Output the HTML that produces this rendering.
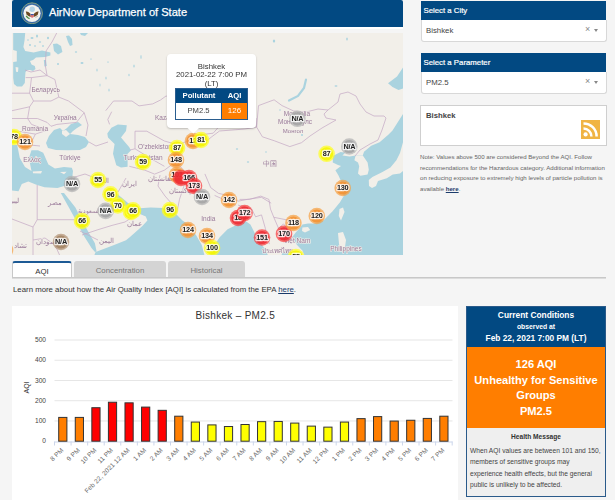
<!DOCTYPE html>
<html><head><meta charset="utf-8">
<style>
html,body{margin:0;padding:0;}
body{width:615px;height:500px;overflow:hidden;background:#f5f5f5;font-family:"Liberation Sans",sans-serif;position:relative;color:#333;}
.abs{position:absolute;}
#hdr{left:12px;top:0;width:391px;height:27px;background:#024982;border-radius:2px 2px 0 0;}
#hdrtxt{left:49px;top:5.8px;font-size:11.1px;-webkit-text-stroke:0.25px #fff;color:#fff;line-height:13px;white-space:nowrap;}
#whitestrip{left:12px;top:27px;width:391px;height:2px;background:#fff;}
#map{left:12px;top:33px;width:391px;height:222px;overflow:hidden;background:#f2efe9;will-change:transform;}
.selhdr{left:421px;width:185px;height:19px;background:#024982;color:#fff;font-size:7.8px;line-height:19px;}
.selhdr span{position:absolute;left:2.5px;top:-0.3px;-webkit-text-stroke:0.2px #fff;}
.selbox{left:420.5px;width:184.5px;height:20.5px;background:#fff;border:1px solid #d8d8d8;border-top:none;border-radius:0 0 3px 3px;font-size:8px;color:#444;}
.selbox .v{position:absolute;left:4.5px;top:6px;line-height:9px;font-size:7.8px;}
.selbox .x{position:absolute;left:163.5px;top:5px;font-size:9px;color:#888;line-height:9px;}
.selbox .c{position:absolute;left:172.5px;top:9px;width:0;height:0;border-left:2.6px solid transparent;border-right:2.6px solid transparent;border-top:3px solid #888;}
#rssbox{left:420px;top:105px;width:185px;height:39px;background:#fff;border:1px solid #cfcfcf;}
#note{left:420px;top:152px;width:192px;font-size:6.1px;line-height:10.7px;color:#666;}
.tab{top:261px;height:16px;border-radius:3px 3px 0 0;font-size:7.8px;line-height:20px;text-align:center;color:#777;background:#d4d4d4;}
#tabline{left:12px;top:277px;width:594px;height:1px;background:#c8c8c8;border-bottom:1px solid #dcdcdc;}
#learn{left:13px;top:285px;font-size:7.82px;line-height:9px;color:#333;white-space:nowrap;}
#chart{left:12px;top:306px;width:446px;height:194px;background:#fff;}
#cc{left:466px;top:306px;width:138px;height:189px;border:1px solid #2a5a8a;background:#efefef;}
#cchead{left:0;top:0;width:138px;height:40px;background:#024982;color:#fff;text-align:center;font-weight:bold;}
#ccorange{left:0;top:40px;width:138px;height:81px;background:#ff7e00;color:#fff;text-align:center;font-weight:bold;font-size:11.1px;line-height:15.6px;}
#cchealth{left:0;top:121px;width:138px;height:68px;color:#333;}
</style></head><body>
<div id="hdr" class="abs"></div>
<div id="seal" class="abs" style="left:21px;top:2px;width:22px;height:22px;">
<svg width="22" height="22" viewBox="0 0 22 22">
<circle cx="11" cy="11.3" r="10.5" fill="#3a6ca6" stroke="#a9b87a" stroke-width="0.7"/>
<circle cx="11" cy="11.3" r="8.6" fill="#f3f2ee"/>
<circle cx="11.2" cy="7.2" r="2.7" fill="#b4d3e6"/>
<path d="M4.8 9.6 Q6.5 8.8 9.3 11.6 L9.8 15 Q7 14.2 5.6 12.4 Z" fill="#6b4a24"/>
<path d="M17.6 9.6 Q15.9 8.8 13.1 11.6 L12.6 15 Q15.4 14.2 16.8 12.4 Z" fill="#6b4a24"/>
<circle cx="11.2" cy="11.2" r="1.2" fill="#f6f6f6"/>
<path d="M9.6 12.4 h3.2 v2.4 q-1.6 1.8 -3.2 0 z" fill="#dc7070"/>
<rect x="9.6" y="12" width="3.2" height="1.1" fill="#3b5aa5"/>
<path d="M5.2 13.8 q1.3 2.2 3.4 2.9" stroke="#4e8d3e" stroke-width="1.3" fill="none"/>
<path d="M14.5 15.5 l2.6 -1.6" stroke="#b8b8b0" stroke-width="1" fill="none"/>
</svg>
</div>
<div id="hdrtxt" class="abs">AirNow Department of State</div>
<div id="whitestrip" class="abs"></div>
<div id="map" class="abs">
<svg width="391" height="222" viewBox="0 0 391 222" id="mapsvg" font-family="Liberation Sans"><ellipse cx="20" cy="5" rx="1.5" ry="1" fill="#aad3df"/>
<ellipse cx="25" cy="3" rx="1" ry="1.5" fill="#aad3df"/>
<ellipse cx="28" cy="9" rx="1.2" ry="0.8" fill="#aad3df"/>
<ellipse cx="18" cy="12" rx="1" ry="1" fill="#aad3df"/>
<ellipse cx="36" cy="5" rx="1" ry="1.2" fill="#aad3df"/>
<ellipse cx="16" cy="7" rx="0.8" ry="0.8" fill="#aad3df"/>
<ellipse cx="23" cy="13" rx="1" ry="0.7" fill="#aad3df"/>
<ellipse cx="31" cy="13" rx="0.8" ry="1" fill="#aad3df"/>
<ellipse cx="64" cy="19" rx="1.2" ry="0.8" fill="#aad3df"/>
<ellipse cx="70" cy="30" rx="1.5" ry="1" fill="#aad3df"/>
<ellipse cx="79" cy="26" rx="1" ry="0.6" fill="#aad3df"/>
<ellipse cx="85" cy="37" rx="0.6" ry="1.5" fill="#aad3df"/>
<ellipse cx="94" cy="45" rx="0.6" ry="1.5" fill="#aad3df"/>
<ellipse cx="96" cy="29" rx="1" ry="0.6" fill="#aad3df"/>
<ellipse cx="46" cy="31" rx="1" ry="1" fill="#aad3df"/>
<ellipse cx="88" cy="52" rx="0.5" ry="1.5" fill="#aad3df"/>
<ellipse cx="97" cy="57" rx="0.6" ry="1.5" fill="#aad3df"/>
<ellipse cx="129" cy="24" rx="0.6" ry="2" fill="#aad3df"/>
<ellipse cx="122" cy="33" rx="0.7" ry="1.5" fill="#aad3df"/>
<ellipse cx="117" cy="42" rx="0.6" ry="1.2" fill="#aad3df"/>
<ellipse cx="262" cy="8" rx="1.2" ry="1.5" fill="#aad3df"/>
<ellipse cx="324" cy="53" rx="1.5" ry="0.8" fill="#aad3df"/>
<ellipse cx="335" cy="6" rx="0.8" ry="1.5" fill="#aad3df"/>
<ellipse cx="290" cy="102" rx="1" ry="1" fill="#aad3df"/>
<ellipse cx="225" cy="116" rx="1.2" ry="0.8" fill="#aad3df"/>
<ellipse cx="236" cy="129" rx="1.2" ry="0.8" fill="#aad3df"/>
<ellipse cx="254" cy="119" rx="0.8" ry="0.8" fill="#aad3df"/>
<ellipse cx="268" cy="77" rx="0.8" ry="0.8" fill="#aad3df"/>
<polygon points="1.2,0.0 13.2,0.0 12.6,7.0 11.4,14.0 13.2,18.0 21.6,19.5 30.0,17.5 38.4,19.5 38.4,22.5 33.0,24.0 24.0,24.5 21.0,27.0 18.0,28.0 19.5,31.5 22.8,33.0 23.5,36.0 21.0,38.0 18.0,37.0 15.6,37.0 13.5,39.0 13.2,43.0 12.8,50.0 10.0,53.6 5.0,53.6 2.0,51.0 1.2,45.0 1.2,29.0 4.8,28.4 4.8,18.0 1.2,17.0" fill="#aad3df"/>
<polygon points="41.0,11.0 45.0,10.5 49.0,13.0 50.4,19.0 46.0,21.6 42.0,18.0" fill="#aad3df"/>
<polygon points="54.0,3.0 57.0,2.4 60.0,6.0 60.5,12.0 58.0,13.0 56.0,9.0" fill="#aad3df"/>
<polygon points="31.8,27.0 34.0,27.0 34.8,33.0 32.5,33.6" fill="#aad3df"/>
<polygon points="68.0,0.0 76.0,0.0 73.0,3.0 69.0,2.0" fill="#aad3df"/>
<polygon points="34.0,110.0 37.0,103.0 42.0,97.0 48.0,95.0 51.0,98.0 55.0,95.0 59.0,91.0 66.0,89.0 70.0,92.0 65.0,95.0 61.0,98.0 58.0,101.0 66.0,102.0 73.0,104.0 77.0,109.0 74.0,114.0 68.0,117.0 56.0,117.2 44.0,117.0 36.0,115.0" fill="#aad3df"/>
<polygon points="0.0,112.0 5.2,112.0 7.8,125.0 13.0,134.0 19.5,138.0 16.9,125.0 19.5,117.2 26.0,117.2 31.2,119.8 36.4,131.5 42.9,135.4 52.0,134.1 59.8,134.8 61.0,138.0 59.8,148.4 55.5,156.0 53.7,152.6 45.5,155.0 32.5,154.2 24.4,151.8 16.3,148.5 9.8,151.0 6.5,158.3 0.0,157.4" fill="#aad3df"/>
<polygon points="48.8,159.9 52.0,159.9 63.4,174.5 68.3,184.3 76.4,198.9 82.9,210.3 84.6,218.4 83.0,219.0 79.7,215.2 71.5,202.2 65.0,189.2 56.9,174.5" fill="#aad3df"/>
<polygon points="82.0,223.0 83.6,219.0 100.8,212.4 114.0,207.2 118.0,204.0 130.4,193.0 135.4,187.5 133.8,183.5 128.0,181.0 128.0,175.3 138.6,174.5 151.2,175.0 165.0,181.9 170.5,187.4 176.0,191.6 184.3,202.6 189.9,212.3 192.6,223.0" fill="#aad3df"/>
<polygon points="105.0,161.0 109.0,164.0 116.0,170.0 124.0,174.0 128.0,175.5 128.0,180.0 122.0,178.0 114.0,174.0 107.0,168.0 103.0,164.0" fill="#aad3df"/>
<polygon points="99.4,94.8 105.9,91.5 114.8,92.3 114.0,98.0 109.0,104.5 117.3,114.3 118.9,117.5 115.6,120.8 115.6,133.8 109.0,134.6 104.3,132.2 101.0,120.8 102.6,111.0 96.0,104.5 95.3,100.5" fill="#aad3df"/>
<polygon points="198.0,223.0 201.0,214.2 207.5,204.4 215.6,196.3 225.4,191.4 233.5,188.1 238.4,191.4 241.7,197.9 246.5,207.7 253.0,215.8 256.3,223.0" fill="#aad3df"/>
<polygon points="271.0,219.0 276.0,217.0 280.0,223.0 269.0,223.0" fill="#aad3df"/>
<polygon points="292.6,223.0 290.4,217.4 284.8,211.8 280.3,204.0 283.7,199.5 287.0,196.1 290.4,191.6 296.0,190.5 301.6,190.5 311.7,187.2 320.6,178.2 328.0,169.2 331.7,163.1 329.5,155.0 328.5,147.0 326.5,142.5 323.4,137.3 329.0,133.0 326.0,132.0 320.8,129.5 320.8,123.0 328.6,119.1 339.0,120.4 343.6,122.4 350.8,122.4 352.0,118.8 359.2,112.8 367.6,109.2 376.0,102.0 380.5,97.6 391.0,81.0 391.0,223.0" fill="#aad3df"/>
<polygon points="391.0,34.5 385.0,43.5 376.0,50.3 380.5,54.0 386.5,57.0 391.0,55.5" fill="#aad3df"/>
<polygon points="3.6,34.0 6.4,34.5 6.0,39.0 4.0,38.8" fill="#f2efe9"/>
<polygon points="50.0,98.0 54.0,97.0 58.0,101.0 54.0,104.0 50.0,101.0" fill="#f2efe9"/>
<polygon points="20.8,138.5 30.0,138.0 29.0,140.6 21.0,140.2" fill="#f2efe9"/>
<polygon points="48.0,139.0 54.6,138.7 52.0,141.3" fill="#f2efe9"/>
<polygon points="391.0,109.2 388.0,120.0 384.4,127.2 378.4,134.4 370.0,139.2 360.4,144.0 356.8,147.0 357.0,153.0 360.0,155.0 364.0,153.0 366.0,148.0 374.8,145.2 380.8,141.6 388.0,140.4 391.0,138.0" fill="#f2efe9"/>
<polygon points="343.6,122.4 350.8,122.4 355.6,129.6 356.8,136.8 355.6,141.6 348.4,142.8 346.0,140.4 347.2,133.2 346.0,129.6 342.4,127.2" fill="#f2efe9"/>
<polygon points="330.4,122.4 337.6,123.6 343.6,122.4 340.0,119.0 333.0,120.0" fill="#f2efe9"/>
<polygon points="327.5,176.0 331.0,174.5 332.5,179.0 329.0,187.5 326.8,183.0" fill="#f2efe9"/>
<polygon points="326.0,200.0 331.0,199.0 334.0,207.0 333.0,214.0 329.0,217.0 327.0,211.0" fill="#f2efe9"/>
<polygon points="290.4,194.5 296.0,193.9 298.2,197.0 293.0,199.5 290.0,198.0" fill="#f2efe9"/>
<polyline points="294.0,46.5 292.0,55.0 286.0,63.0 277.0,67.5" fill="none" stroke="#aad3df" stroke-width="2.2" stroke-linecap="round"/>
<polyline points="44.7,0.0 40.0,9.0 34.1,17.9 33.3,32.5 35.1,42.6" fill="none" stroke="#c4a9c4" stroke-width="0.9" stroke-opacity="0.8"/>
<polyline points="19.5,44.6 35.1,42.6 42.9,46.5 46.8,64.1 39.0,68.0 21.5,68.0 17.6,60.2 19.5,44.6" fill="none" stroke="#c4a9c4" stroke-width="0.9" stroke-opacity="0.8"/>
<polyline points="13.7,44.6 19.5,44.6" fill="none" stroke="#c4a9c4" stroke-width="0.9" stroke-opacity="0.8"/>
<polyline points="13.0,37.0 19.0,39.0 28.0,37.0 35.1,42.6" fill="none" stroke="#c4a9c4" stroke-width="0.9" stroke-opacity="0.8"/>
<polyline points="21.5,68.0 17.6,73.8 15.6,85.5 25.4,85.5 35.1,89.4 39.0,93.3 44.9,91.4 64.4,89.4 72.2,79.7 56.6,68.0 46.8,64.1" fill="none" stroke="#c4a9c4" stroke-width="0.9" stroke-opacity="0.8"/>
<polyline points="0.0,60.2 17.6,60.2" fill="none" stroke="#c4a9c4" stroke-width="0.9" stroke-opacity="0.8"/>
<polyline points="0.0,77.7 17.6,73.8" fill="none" stroke="#c4a9c4" stroke-width="0.9" stroke-opacity="0.8"/>
<polyline points="0.0,85.5 15.6,85.5 19.5,91.4 35.1,97.2 23.4,101.1 0.0,97.2" fill="none" stroke="#c4a9c4" stroke-width="0.9" stroke-opacity="0.8"/>
<polyline points="23.4,101.1 18.0,112.0 28.0,113.0" fill="none" stroke="#c4a9c4" stroke-width="0.9" stroke-opacity="0.8"/>
<polyline points="72.2,79.7 76.0,92.0 74.0,103.0" fill="none" stroke="#c4a9c4" stroke-width="0.9" stroke-opacity="0.8"/>
<polyline points="77.0,109.0 84.0,113.0 96.0,109.0" fill="none" stroke="#c4a9c4" stroke-width="0.9" stroke-opacity="0.8"/>
<polyline points="93.7,77.7 101.5,68.0 120.0,68.0 127.0,72.9 140.7,70.9 148.5,67.0 154.0,63.0 168.0,66.0 186.0,63.0 203.0,67.0 218.0,71.0 232.0,77.0 244.0,85.0 244.6,94.1" fill="none" stroke="#c4a9c4" stroke-width="0.9" stroke-opacity="0.8"/>
<polyline points="99.7,78.7 95.8,86.5 97.6,91.4" fill="none" stroke="#c4a9c4" stroke-width="0.9" stroke-opacity="0.8"/>
<polyline points="118.0,117.0 123.0,115.8 123.0,98.2 134.8,98.2 152.4,108.0 166.0,111.9 175.8,108.0 185.6,102.1 201.2,100.2 208.0,92.4" fill="none" stroke="#c4a9c4" stroke-width="0.9" stroke-opacity="0.8"/>
<polyline points="117.3,133.3 132.9,137.2 142.6,141.1 152.4,137.2 160.2,131.4" fill="none" stroke="#c4a9c4" stroke-width="0.9" stroke-opacity="0.8"/>
<polyline points="123.0,115.8 138.7,125.5 152.4,133.3" fill="none" stroke="#c4a9c4" stroke-width="0.9" stroke-opacity="0.8"/>
<polyline points="244.6,94.1 246.5,72.6 262.1,66.8 270.0,72.6 281.7,78.0 294.0,79.0 306.0,76.0 316.0,77.0 312.0,81.0 314.0,85.0 324.0,87.0 310.0,95.0 298.0,103.0 289.5,109.7 277.8,113.6 262.1,107.7 250.4,103.8 244.6,94.1" fill="none" stroke="#c4a9c4" stroke-width="0.9" stroke-opacity="0.8"/>
<polyline points="316.0,77.0 326.0,69.0 328.0,61.0 336.0,59.0 344.0,63.0 348.0,71.0 354.0,79.0 362.0,83.0 372.0,83.0 374.0,85.0 370.0,97.0 366.0,107.0 358.0,111.0 348.0,117.0 343.0,123.0" fill="none" stroke="#c4a9c4" stroke-width="0.9" stroke-opacity="0.8"/>
<polyline points="188.0,113.6 199.7,103.8 207.5,98.0 232.9,96.0 244.6,94.1" fill="none" stroke="#c4a9c4" stroke-width="0.9" stroke-opacity="0.8"/>
<polyline points="192.9,140.9 198.7,154.6 206.5,160.4 216.3,162.4 226.0,168.2 235.8,166.3 249.5,164.3 259.2,170.2" fill="none" stroke="#c4a9c4" stroke-width="0.9" stroke-opacity="0.8"/>
<polyline points="202.6,162.4 224.1,172.1" fill="none" stroke="#c4a9c4" stroke-width="0.9" stroke-opacity="0.8"/>
<polyline points="173.4,148.7 167.5,166.3 165.6,176.0 163.6,181.9" fill="none" stroke="#c4a9c4" stroke-width="0.9" stroke-opacity="0.8"/>
<polyline points="226.0,172.1 239.7,176.0 243.6,183.8 249.5,181.9 253.4,195.5 257.3,211.1" fill="none" stroke="#c4a9c4" stroke-width="0.9" stroke-opacity="0.8"/>
<polyline points="227.6,166.4 237.4,166.4 248.8,163.1 256.9,166.4 258.5,176.1 261.8,184.3 269.9,185.9 278.0,187.5 287.8,189.2" fill="none" stroke="#c4a9c4" stroke-width="0.9" stroke-opacity="0.8"/>
<polyline points="261.8,184.3 266.7,195.7 271.5,190.8 278.0,199.0 281.0,207.0" fill="none" stroke="#c4a9c4" stroke-width="0.9" stroke-opacity="0.8"/>
<polyline points="160.2,131.4 168.0,133.0 173.0,139.0 173.4,148.7" fill="none" stroke="#c4a9c4" stroke-width="0.9" stroke-opacity="0.8"/>
<polyline points="148.0,142.0 146.0,153.0 153.0,163.0 160.0,171.0 165.6,176.0" fill="none" stroke="#c4a9c4" stroke-width="0.9" stroke-opacity="0.8"/>
<polyline points="114.0,145.0 110.0,152.0 106.0,159.0" fill="none" stroke="#c4a9c4" stroke-width="0.9" stroke-opacity="0.8"/>
<polyline points="55.0,151.0 63.0,144.0 73.0,141.0 83.0,145.0 88.0,151.0" fill="none" stroke="#c4a9c4" stroke-width="0.9" stroke-opacity="0.8"/>
<polyline points="25.2,152.0 25.2,186.7 62.6,186.7" fill="none" stroke="#c4a9c4" stroke-width="0.9" stroke-opacity="0.8"/>
<polyline points="25.2,186.7 21.0,194.0 21.0,223.0" fill="none" stroke="#c4a9c4" stroke-width="0.9" stroke-opacity="0.8"/>
<polyline points="0.0,186.0 21.0,194.0" fill="none" stroke="#c4a9c4" stroke-width="0.9" stroke-opacity="0.8"/>
<polyline points="21.0,207.0 33.0,205.0 43.0,212.0 48.0,223.0" fill="none" stroke="#c4a9c4" stroke-width="0.9" stroke-opacity="0.8"/>
<polyline points="68.0,198.0 78.0,203.0 86.0,207.0" fill="none" stroke="#c4a9c4" stroke-width="0.9" stroke-opacity="0.8"/>
<polyline points="70.0,202.0 85.0,197.0 100.0,192.4 113.0,189.0 122.0,183.0" fill="none" stroke="#c4a9c4" stroke-width="0.9" stroke-opacity="0.8"/>
<text x="33.6" y="59" text-anchor="middle" font-size="6.5" fill="#9a7a9a" stroke="#f2efe9" stroke-width="1.2" paint-order="stroke">Беларусь</text>
<text x="53.2" y="86.5" text-anchor="middle" font-size="6.5" fill="#9a7a9a" stroke="#f2efe9" stroke-width="1.2" paint-order="stroke">Україна</text>
<text x="23" y="97.5" text-anchor="middle" font-size="6.5" fill="#9a7a9a" stroke="#f2efe9" stroke-width="1.2" paint-order="stroke">România</text>
<text x="20" y="128.5" text-anchor="middle" font-size="6.5" fill="#9a7a9a" stroke="#f2efe9" stroke-width="1.2" paint-order="stroke">Ελλάς</text>
<text x="58" y="127" text-anchor="middle" font-size="6.5" fill="#9a7a9a" stroke="#f2efe9" stroke-width="1.2" paint-order="stroke">Türkiye</text>
<text x="160" y="86.5" text-anchor="middle" font-size="6.5" fill="#9a7a9a" stroke="#f2efe9" stroke-width="1.2" paint-order="stroke">Kazakhstan</text>
<text x="143" y="116" text-anchor="middle" font-size="6.5" fill="#9a7a9a" stroke="#f2efe9" stroke-width="1.2" paint-order="stroke">O'zbekiston</text>
<text x="131" y="127" text-anchor="middle" font-size="6.5" fill="#9a7a9a" stroke="#f2efe9" stroke-width="1.2" paint-order="stroke">Turkmenistan</text>
<text x="117.19999999999999" y="153" text-anchor="middle" font-size="6.5" fill="#9a7a9a" stroke="#f2efe9" stroke-width="1.2" paint-order="stroke">ایران</text>
<text x="43" y="172" text-anchor="middle" font-size="6.5" fill="#9a7a9a" stroke="#f2efe9" stroke-width="1.2" paint-order="stroke">مصر</text>
<text x="167.5" y="159.5" text-anchor="middle" font-size="6.5" fill="#9a7a9a" stroke="#f2efe9" stroke-width="1.2" paint-order="stroke">پاکستان</text>
<text x="196.3" y="188" text-anchor="middle" font-size="6.5" fill="#9a7a9a" stroke="#f2efe9" stroke-width="1.2" paint-order="stroke">India</text>
<text x="257.7" y="132.5" text-anchor="middle" font-size="6.5" fill="#9a7a9a" stroke="#f2efe9" stroke-width="1.2" paint-order="stroke">中国</text>
<text x="285" y="210" text-anchor="middle" font-size="6.5" fill="#9a7a9a" stroke="#f2efe9" stroke-width="1.2" paint-order="stroke">Việt Nam</text>
<text x="334" y="218" text-anchor="middle" font-size="6.5" fill="#9a7a9a" stroke="#f2efe9" stroke-width="1.2" paint-order="stroke">Philippines</text>
<text x="265" y="219.5" text-anchor="middle" font-size="6.5" fill="#9a7a9a" stroke="#f2efe9" stroke-width="1.2" paint-order="stroke">ประเทศไทย</text>
<text x="149" y="148" text-anchor="middle" font-size="6.5" fill="#9a7a9a" stroke="#f2efe9" stroke-width="1.2" paint-order="stroke">افغانستان</text>
<text x="77" y="180" text-anchor="middle" font-size="6" fill="#9a7a9a" stroke="#f2efe9" stroke-width="1.2" paint-order="stroke">السعودية</text>
<text x="94" y="210" text-anchor="middle" font-size="6.5" fill="#9a7a9a" stroke="#f2efe9" stroke-width="1.2" paint-order="stroke">اليمن</text>
<text x="122" y="193" text-anchor="middle" font-size="6.5" fill="#9a7a9a" stroke="#f2efe9" stroke-width="1.2" paint-order="stroke">عمان</text>
<text x="8" y="215" text-anchor="middle" font-size="6.5" fill="#9a7a9a" stroke="#f2efe9" stroke-width="1.2" paint-order="stroke">تشاد</text>
<text x="36" y="211" text-anchor="middle" font-size="6.5" fill="#9a7a9a" stroke="#f2efe9" stroke-width="1.2" paint-order="stroke">السودان</text>
<text x="285" y="82.5" text-anchor="middle" font-size="6.5" fill="#9a7a9a" stroke="#f2efe9" stroke-width="1.2" paint-order="stroke">Mongolia</text>
<text x="283" y="91" text-anchor="middle" font-size="6.5" fill="#9a7a9a" stroke="#f2efe9" stroke-width="1.2" paint-order="stroke">Монгол улс</text>
<text x="281" y="99.5" text-anchor="middle" font-size="6" fill="#9a7a9a" stroke="#f2efe9" stroke-width="1.2" paint-order="stroke">Монгол</text>
<text x="88" y="150" text-anchor="middle" font-size="6.5" fill="#9a7a9a" stroke="#f2efe9" stroke-width="1.2" paint-order="stroke">العراق</text>
<text x="2" y="170" text-anchor="middle" font-size="6.5" fill="#9a7a9a" stroke="#f2efe9" stroke-width="1.2" paint-order="stroke">ليبيا</text>
<circle cx="2" cy="104" r="8.3" fill="#ffff20" fill-opacity="0.7"/><circle cx="2" cy="104" r="6.6" fill="#f4f400" fill-opacity="0.85"/>
<text x="2" y="106.2" text-anchor="middle" font-size="7.3" letter-spacing="-0.25" font-weight="bold" fill="#222" stroke="#fff" stroke-opacity="0.8" stroke-width="2.6" paint-order="stroke" stroke-linejoin="round">78</text>
<circle cx="13" cy="109" r="8.3" fill="#f7a040" fill-opacity="0.7"/><circle cx="13" cy="109" r="6.6" fill="#f29232" fill-opacity="0.85"/>
<text x="13" y="111.2" text-anchor="middle" font-size="7.3" letter-spacing="-0.25" font-weight="bold" fill="#222" stroke="#fff" stroke-opacity="0.8" stroke-width="2.6" paint-order="stroke" stroke-linejoin="round">121</text>
<circle cx="60" cy="151" r="8.3" fill="#b0b0b0" fill-opacity="0.7"/><circle cx="60" cy="151" r="6.6" fill="#a4a4a4" fill-opacity="0.85"/>
<text x="60" y="153.2" text-anchor="middle" font-size="7.3" letter-spacing="-0.25" font-weight="bold" fill="#222" stroke="#fff" stroke-opacity="0.8" stroke-width="2.6" paint-order="stroke" stroke-linejoin="round">N/A</text>
<circle cx="86" cy="147" r="8.3" fill="#ffff20" fill-opacity="0.7"/><circle cx="86" cy="147" r="6.6" fill="#f4f400" fill-opacity="0.85"/>
<text x="86" y="149.2" text-anchor="middle" font-size="7.3" letter-spacing="-0.25" font-weight="bold" fill="#222" stroke="#fff" stroke-opacity="0.8" stroke-width="2.6" paint-order="stroke" stroke-linejoin="round">55</text>
<circle cx="98.5" cy="161.3" r="8.3" fill="#ffff20" fill-opacity="0.7"/><circle cx="98.5" cy="161.3" r="6.6" fill="#f4f400" fill-opacity="0.85"/>
<text x="98.5" y="163.5" text-anchor="middle" font-size="7.3" letter-spacing="-0.25" font-weight="bold" fill="#222" stroke="#fff" stroke-opacity="0.8" stroke-width="2.6" paint-order="stroke" stroke-linejoin="round">96</text>
<circle cx="105.8" cy="172.5" r="8.3" fill="#ffff20" fill-opacity="0.7"/><circle cx="105.8" cy="172.5" r="6.6" fill="#f4f400" fill-opacity="0.85"/>
<text x="105.8" y="174.7" text-anchor="middle" font-size="7.3" letter-spacing="-0.25" font-weight="bold" fill="#222" stroke="#fff" stroke-opacity="0.8" stroke-width="2.6" paint-order="stroke" stroke-linejoin="round">70</text>
<circle cx="93.6" cy="177.9" r="8.3" fill="#b0b0b0" fill-opacity="0.7"/><circle cx="93.6" cy="177.9" r="6.6" fill="#a4a4a4" fill-opacity="0.85"/>
<text x="93.6" y="180.1" text-anchor="middle" font-size="7.3" letter-spacing="-0.25" font-weight="bold" fill="#222" stroke="#fff" stroke-opacity="0.8" stroke-width="2.6" paint-order="stroke" stroke-linejoin="round">N/A</text>
<circle cx="119" cy="179" r="8.3" fill="#ffff20" fill-opacity="0.7"/><circle cx="119" cy="179" r="6.6" fill="#f4f400" fill-opacity="0.85"/>
<text x="119" y="181.2" text-anchor="middle" font-size="7.3" letter-spacing="-0.25" font-weight="bold" fill="#222" stroke="#fff" stroke-opacity="0.8" stroke-width="2.6" paint-order="stroke" stroke-linejoin="round">58</text>
<circle cx="121" cy="177.4" r="8.3" fill="#ffff20" fill-opacity="0.7"/><circle cx="121" cy="177.4" r="6.6" fill="#f4f400" fill-opacity="0.85"/>
<text x="121" y="179.6" text-anchor="middle" font-size="7.3" letter-spacing="-0.25" font-weight="bold" fill="#222" stroke="#fff" stroke-opacity="0.8" stroke-width="2.6" paint-order="stroke" stroke-linejoin="round">66</text>
<circle cx="70" cy="188" r="8.3" fill="#ffff20" fill-opacity="0.7"/><circle cx="70" cy="188" r="6.6" fill="#f4f400" fill-opacity="0.85"/>
<text x="70" y="190.2" text-anchor="middle" font-size="7.3" letter-spacing="-0.25" font-weight="bold" fill="#222" stroke="#fff" stroke-opacity="0.8" stroke-width="2.6" paint-order="stroke" stroke-linejoin="round">66</text>
<circle cx="49" cy="209" r="8.3" fill="#b09070" fill-opacity="0.7"/><circle cx="49" cy="209" r="6.6" fill="#a48464" fill-opacity="0.85"/>
<text x="49" y="211.2" text-anchor="middle" font-size="7.3" letter-spacing="-0.25" font-weight="bold" fill="#222" stroke="#fff" stroke-opacity="0.8" stroke-width="2.6" paint-order="stroke" stroke-linejoin="round">N/A</text>
<circle cx="131" cy="129" r="8.3" fill="#ffff20" fill-opacity="0.7"/><circle cx="131" cy="129" r="6.6" fill="#f4f400" fill-opacity="0.85"/>
<text x="131" y="131.2" text-anchor="middle" font-size="7.3" letter-spacing="-0.25" font-weight="bold" fill="#222" stroke="#fff" stroke-opacity="0.8" stroke-width="2.6" paint-order="stroke" stroke-linejoin="round">59</text>
<circle cx="165" cy="115" r="8.3" fill="#ffff20" fill-opacity="0.7"/><circle cx="165" cy="115" r="6.6" fill="#f4f400" fill-opacity="0.85"/>
<text x="165" y="117.2" text-anchor="middle" font-size="7.3" letter-spacing="-0.25" font-weight="bold" fill="#222" stroke="#fff" stroke-opacity="0.8" stroke-width="2.6" paint-order="stroke" stroke-linejoin="round">87</text>
<circle cx="164" cy="127" r="8.3" fill="#f7a040" fill-opacity="0.7"/><circle cx="164" cy="127" r="6.6" fill="#f29232" fill-opacity="0.85"/>
<text x="164" y="129.2" text-anchor="middle" font-size="7.3" letter-spacing="-0.25" font-weight="bold" fill="#222" stroke="#fff" stroke-opacity="0.8" stroke-width="2.6" paint-order="stroke" stroke-linejoin="round">148</text>
<circle cx="181" cy="108" r="8.3" fill="#f7a040" fill-opacity="0.7"/><circle cx="181" cy="108" r="6.6" fill="#f29232" fill-opacity="0.85"/>
<text x="181" y="110.2" text-anchor="middle" font-size="7.3" letter-spacing="-0.25" font-weight="bold" fill="#222" stroke="#fff" stroke-opacity="0.8" stroke-width="2.6" paint-order="stroke" stroke-linejoin="round">12</text>
<circle cx="189" cy="107" r="8.3" fill="#ffff20" fill-opacity="0.7"/><circle cx="189" cy="107" r="6.6" fill="#f4f400" fill-opacity="0.85"/>
<text x="189" y="109.2" text-anchor="middle" font-size="7.3" letter-spacing="-0.25" font-weight="bold" fill="#222" stroke="#fff" stroke-opacity="0.8" stroke-width="2.6" paint-order="stroke" stroke-linejoin="round">81</text>
<circle cx="165" cy="142" r="8.3" fill="#f7a040" fill-opacity="0.7"/><circle cx="165" cy="142" r="6.6" fill="#f29232" fill-opacity="0.85"/>
<text x="165" y="144.2" text-anchor="middle" font-size="7.3" letter-spacing="-0.25" font-weight="bold" fill="#222" stroke="#fff" stroke-opacity="0.8" stroke-width="2.6" paint-order="stroke" stroke-linejoin="round">101</text>
<circle cx="169" cy="145" r="8.3" fill="#f83838" fill-opacity="0.7"/><circle cx="169" cy="145" r="6.6" fill="#ec2c34" fill-opacity="0.85"/>
<circle cx="177" cy="145" r="8.3" fill="#f83838" fill-opacity="0.7"/><circle cx="177" cy="145" r="6.6" fill="#ec2c34" fill-opacity="0.85"/>
<text x="177" y="147.2" text-anchor="middle" font-size="7.3" letter-spacing="-0.25" font-weight="bold" fill="#222" stroke="#fff" stroke-opacity="0.8" stroke-width="2.6" paint-order="stroke" stroke-linejoin="round">166</text>
<circle cx="182" cy="153" r="8.3" fill="#f83838" fill-opacity="0.7"/><circle cx="182" cy="153" r="6.6" fill="#ec2c34" fill-opacity="0.85"/>
<text x="182" y="155.2" text-anchor="middle" font-size="7.3" letter-spacing="-0.25" font-weight="bold" fill="#222" stroke="#fff" stroke-opacity="0.8" stroke-width="2.6" paint-order="stroke" stroke-linejoin="round">173</text>
<circle cx="190" cy="164" r="8.3" fill="#b0b0b0" fill-opacity="0.7"/><circle cx="190" cy="164" r="6.6" fill="#a4a4a4" fill-opacity="0.85"/>
<text x="190" y="166.2" text-anchor="middle" font-size="7.3" letter-spacing="-0.25" font-weight="bold" fill="#222" stroke="#fff" stroke-opacity="0.8" stroke-width="2.6" paint-order="stroke" stroke-linejoin="round">N/A</text>
<circle cx="217" cy="167" r="8.3" fill="#f7a040" fill-opacity="0.7"/><circle cx="217" cy="167" r="6.6" fill="#f29232" fill-opacity="0.85"/>
<text x="217" y="169.2" text-anchor="middle" font-size="7.3" letter-spacing="-0.25" font-weight="bold" fill="#222" stroke="#fff" stroke-opacity="0.8" stroke-width="2.6" paint-order="stroke" stroke-linejoin="round">142</text>
<circle cx="158" cy="177" r="8.3" fill="#ffff20" fill-opacity="0.7"/><circle cx="158" cy="177" r="6.6" fill="#f4f400" fill-opacity="0.85"/>
<text x="158" y="179.2" text-anchor="middle" font-size="7.3" letter-spacing="-0.25" font-weight="bold" fill="#222" stroke="#fff" stroke-opacity="0.8" stroke-width="2.6" paint-order="stroke" stroke-linejoin="round">96</text>
<circle cx="176" cy="197" r="8.3" fill="#f7a040" fill-opacity="0.7"/><circle cx="176" cy="197" r="6.6" fill="#f29232" fill-opacity="0.85"/>
<text x="176" y="199.2" text-anchor="middle" font-size="7.3" letter-spacing="-0.25" font-weight="bold" fill="#222" stroke="#fff" stroke-opacity="0.8" stroke-width="2.6" paint-order="stroke" stroke-linejoin="round">124</text>
<circle cx="195" cy="203" r="8.3" fill="#f7a040" fill-opacity="0.7"/><circle cx="195" cy="203" r="6.6" fill="#f29232" fill-opacity="0.85"/>
<text x="195" y="205.2" text-anchor="middle" font-size="7.3" letter-spacing="-0.25" font-weight="bold" fill="#222" stroke="#fff" stroke-opacity="0.8" stroke-width="2.6" paint-order="stroke" stroke-linejoin="round">134</text>
<circle cx="200" cy="215" r="8.3" fill="#ffff20" fill-opacity="0.7"/><circle cx="200" cy="215" r="6.6" fill="#f4f400" fill-opacity="0.85"/>
<text x="200" y="217.2" text-anchor="middle" font-size="7.3" letter-spacing="-0.25" font-weight="bold" fill="#222" stroke="#fff" stroke-opacity="0.8" stroke-width="2.6" paint-order="stroke" stroke-linejoin="round">100</text>
<circle cx="226" cy="185" r="8.3" fill="#f83838" fill-opacity="0.7"/><circle cx="226" cy="185" r="6.6" fill="#ec2c34" fill-opacity="0.85"/>
<text x="226" y="187.2" text-anchor="middle" font-size="7.3" letter-spacing="-0.25" font-weight="bold" fill="#222" stroke="#fff" stroke-opacity="0.8" stroke-width="2.6" paint-order="stroke" stroke-linejoin="round">18</text>
<circle cx="232.6" cy="180" r="8.3" fill="#f83838" fill-opacity="0.7"/><circle cx="232.6" cy="180" r="6.6" fill="#ec2c34" fill-opacity="0.85"/>
<text x="232.6" y="182.2" text-anchor="middle" font-size="7.3" letter-spacing="-0.25" font-weight="bold" fill="#222" stroke="#fff" stroke-opacity="0.8" stroke-width="2.6" paint-order="stroke" stroke-linejoin="round">172</text>
<circle cx="250" cy="204.5" r="8.3" fill="#f83838" fill-opacity="0.7"/><circle cx="250" cy="204.5" r="6.6" fill="#ec2c34" fill-opacity="0.85"/>
<text x="250" y="206.7" text-anchor="middle" font-size="7.3" letter-spacing="-0.25" font-weight="bold" fill="#222" stroke="#fff" stroke-opacity="0.8" stroke-width="2.6" paint-order="stroke" stroke-linejoin="round">151</text>
<circle cx="272" cy="200.9" r="8.3" fill="#f83838" fill-opacity="0.7"/><circle cx="272" cy="200.9" r="6.6" fill="#ec2c34" fill-opacity="0.85"/>
<text x="272" y="203.1" text-anchor="middle" font-size="7.3" letter-spacing="-0.25" font-weight="bold" fill="#222" stroke="#fff" stroke-opacity="0.8" stroke-width="2.6" paint-order="stroke" stroke-linejoin="round">170</text>
<circle cx="281.4" cy="190" r="8.3" fill="#f7a040" fill-opacity="0.7"/><circle cx="281.4" cy="190" r="6.6" fill="#f29232" fill-opacity="0.85"/>
<text x="281.4" y="192.2" text-anchor="middle" font-size="7.3" letter-spacing="-0.25" font-weight="bold" fill="#222" stroke="#fff" stroke-opacity="0.8" stroke-width="2.6" paint-order="stroke" stroke-linejoin="round">118</text>
<circle cx="304.8" cy="183" r="8.3" fill="#f7a040" fill-opacity="0.7"/><circle cx="304.8" cy="183" r="6.6" fill="#f29232" fill-opacity="0.85"/>
<text x="304.8" y="185.2" text-anchor="middle" font-size="7.3" letter-spacing="-0.25" font-weight="bold" fill="#222" stroke="#fff" stroke-opacity="0.8" stroke-width="2.6" paint-order="stroke" stroke-linejoin="round">120</text>
<circle cx="330.7" cy="155" r="8.3" fill="#f7a040" fill-opacity="0.7"/><circle cx="330.7" cy="155" r="6.6" fill="#f29232" fill-opacity="0.85"/>
<text x="330.7" y="157.2" text-anchor="middle" font-size="7.3" letter-spacing="-0.25" font-weight="bold" fill="#222" stroke="#fff" stroke-opacity="0.8" stroke-width="2.6" paint-order="stroke" stroke-linejoin="round">130</text>
<circle cx="284" cy="224" r="8.3" fill="#ffff20" fill-opacity="0.7"/><circle cx="284" cy="224" r="6.6" fill="#f4f400" fill-opacity="0.85"/>
<text x="284" y="226.2" text-anchor="middle" font-size="7.3" letter-spacing="-0.25" font-weight="bold" fill="#222" stroke="#fff" stroke-opacity="0.8" stroke-width="2.6" paint-order="stroke" stroke-linejoin="round">55</text>
<circle cx="314.6" cy="120.80000000000001" r="8.3" fill="#ffff20" fill-opacity="0.7"/><circle cx="314.6" cy="120.80000000000001" r="6.6" fill="#f4f400" fill-opacity="0.85"/>
<text x="314.6" y="123.00000000000001" text-anchor="middle" font-size="7.3" letter-spacing="-0.25" font-weight="bold" fill="#222" stroke="#fff" stroke-opacity="0.8" stroke-width="2.6" paint-order="stroke" stroke-linejoin="round">87</text>
<circle cx="337.3" cy="113.5" r="8.3" fill="#b0b0b0" fill-opacity="0.7"/><circle cx="337.3" cy="113.5" r="6.6" fill="#a4a4a4" fill-opacity="0.85"/>
<text x="337.3" y="115.7" text-anchor="middle" font-size="7.3" letter-spacing="-0.25" font-weight="bold" fill="#222" stroke="#fff" stroke-opacity="0.8" stroke-width="2.6" paint-order="stroke" stroke-linejoin="round">N/A</text>
<circle cx="285.4" cy="85.8" r="8.3" fill="#b0b0b0" fill-opacity="0.7"/><circle cx="285.4" cy="85.8" r="6.6" fill="#a4a4a4" fill-opacity="0.85"/>
<text x="285.4" y="88.0" text-anchor="middle" font-size="7.3" letter-spacing="-0.25" font-weight="bold" fill="#222" stroke="#fff" stroke-opacity="0.8" stroke-width="2.6" paint-order="stroke" stroke-linejoin="round">N/A</text>
<circle cx="-7" cy="217" r="8.3" fill="#f7a040" fill-opacity="0.7"/><circle cx="-7" cy="217" r="6.6" fill="#f29232" fill-opacity="0.85"/></svg>
</div>

<div id="popup" class="abs" style="left:167px;top:54px;width:89px;height:74px;background:#fff;border-radius:4px;box-shadow:0 1px 2px rgba(0,0,0,0.22);"></div>
<div class="abs" style="left:187px;top:127.5px;width:12.5px;height:6px;background:#fff;clip-path:polygon(0 0,100% 0,50% 100%);"></div>
<div class="abs" style="left:167px;top:62.5px;width:89px;text-align:center;font-size:7.8px;line-height:8.5px;color:#333;">Bishkek<br>2021-02-22 7:00 PM<br>(LT)</div>
<div class="abs" style="left:175px;top:87.5px;width:71px;height:30.5px;border:1px solid #2a5d8f;background:#fff;">
<div class="abs" style="left:0;top:0;width:71px;height:14.5px;background:#024982;color:#fff;font-weight:bold;font-size:7.7px;line-height:14px;"><span class="abs" style="left:0;width:46px;text-align:center;">Pollutant</span><span class="abs" style="left:46px;width:25px;text-align:center;">AQI</span></div>
<div class="abs" style="left:0;top:14.5px;width:45px;height:16px;border-right:1px solid #2a5d8f;font-size:7.7px;line-height:16px;text-align:center;color:#444;">PM2.5</div>
<div class="abs" style="left:46px;top:14.5px;width:25px;height:16px;background:#ff7e00;font-size:8px;line-height:16px;text-align:center;color:#fff;">126</div>
</div>
<div class="abs selhdr" style="top:1px;"><span>Select a City</span></div>
<div class="abs selbox" style="top:20px;"><span class="v">Bishkek</span><span class="x">×</span><span class="c"></span></div>
<div class="abs selhdr" style="top:53px;"><span>Select a Parameter</span></div>
<div class="abs selbox" style="top:72px;"><span class="v">PM2.5</span><span class="x">×</span><span class="c"></span></div>

<div id="rssbox" class="abs">
<div class="abs" style="left:5px;top:4.8px;font-size:7.7px;font-weight:bold;color:#444;">Bishkek</div>
<div class="abs" style="left:160px;top:14px;width:19px;height:19px;background:#f0b444;">
<svg width="19" height="19" viewBox="0 0 19 19"><circle cx="4.6" cy="14.4" r="2.1" fill="#fff"/><path d="M2.5 8.6 a7.9 7.9 0 0 1 7.9 7.9" stroke="#fff" stroke-width="2.5" fill="none"/><path d="M2.5 3.4 a13.1 13.1 0 0 1 13.1 13.1" stroke="#fff" stroke-width="2.5" fill="none"/></svg>
</div>
</div>
<div id="note" class="abs">Note: Values above 500 are considered Beyond the AQI. Follow recommendations for the Hazardous category. Additional information on reducing exposure to extremely high levels of particle pollution is available <b style="text-decoration:underline;color:#1c3c6c;">here</b>.</div>

<div class="abs tab" style="left:12px;width:58px;background:#fff;border:1px solid #c8c8c8;border-top:2px solid #1d5a95;border-bottom:none;height:15px;line-height:17px;color:#333;">AQI</div>
<div class="abs tab" style="left:74px;width:92px;">Concentration</div>
<div class="abs tab" style="left:168px;width:77px;">Historical</div>
<div id="tabline" class="abs"></div>
<div id="learn" class="abs">Learn more about how the Air Quality Index [AQI] is calculated from the EPA <u style="color:#1a3a6a;">here</u>.</div>

<div id="chart" class="abs">
<svg width="446" height="194" viewBox="0 0 446 194" id="chartsvg" font-family="Liberation Sans"><rect x="42.5" y="114.46" width="398.0" height="1" fill="#e6e6e6"/>
<rect x="42.5" y="94.22" width="398.0" height="1" fill="#e6e6e6"/>
<rect x="42.5" y="73.98" width="398.0" height="1" fill="#e6e6e6"/>
<rect x="42.5" y="53.74" width="398.0" height="1" fill="#e6e6e6"/>
<rect x="42.5" y="33.50" width="398.0" height="1" fill="#e6e6e6"/>
<text x="34" y="137.40" text-anchor="end" font-size="6.6" fill="#444">0</text>
<text x="34" y="117.16" text-anchor="end" font-size="6.6" fill="#444">100</text>
<text x="34" y="96.92" text-anchor="end" font-size="6.6" fill="#444">200</text>
<text x="34" y="76.68" text-anchor="end" font-size="6.6" fill="#444">300</text>
<text x="34" y="56.44" text-anchor="end" font-size="6.6" fill="#444">400</text>
<text x="34" y="36.20" text-anchor="end" font-size="6.6" fill="#444">500</text>
<rect x="42.5" y="135.5" width="398.0" height="1" fill="#ccd6eb"/>
<rect x="42.00" y="135.5" width="1" height="4" fill="#ccd6eb"/>
<rect x="58.57" y="135.5" width="1" height="4" fill="#ccd6eb"/>
<rect x="75.14" y="135.5" width="1" height="4" fill="#ccd6eb"/>
<rect x="91.71" y="135.5" width="1" height="4" fill="#ccd6eb"/>
<rect x="108.28" y="135.5" width="1" height="4" fill="#ccd6eb"/>
<rect x="124.85" y="135.5" width="1" height="4" fill="#ccd6eb"/>
<rect x="141.42" y="135.5" width="1" height="4" fill="#ccd6eb"/>
<rect x="157.99" y="135.5" width="1" height="4" fill="#ccd6eb"/>
<rect x="174.56" y="135.5" width="1" height="4" fill="#ccd6eb"/>
<rect x="191.13" y="135.5" width="1" height="4" fill="#ccd6eb"/>
<rect x="207.70" y="135.5" width="1" height="4" fill="#ccd6eb"/>
<rect x="224.27" y="135.5" width="1" height="4" fill="#ccd6eb"/>
<rect x="240.83" y="135.5" width="1" height="4" fill="#ccd6eb"/>
<rect x="257.40" y="135.5" width="1" height="4" fill="#ccd6eb"/>
<rect x="273.97" y="135.5" width="1" height="4" fill="#ccd6eb"/>
<rect x="290.54" y="135.5" width="1" height="4" fill="#ccd6eb"/>
<rect x="307.11" y="135.5" width="1" height="4" fill="#ccd6eb"/>
<rect x="323.68" y="135.5" width="1" height="4" fill="#ccd6eb"/>
<rect x="340.25" y="135.5" width="1" height="4" fill="#ccd6eb"/>
<rect x="356.82" y="135.5" width="1" height="4" fill="#ccd6eb"/>
<rect x="373.39" y="135.5" width="1" height="4" fill="#ccd6eb"/>
<rect x="389.96" y="135.5" width="1" height="4" fill="#ccd6eb"/>
<rect x="406.53" y="135.5" width="1" height="4" fill="#ccd6eb"/>
<rect x="423.10" y="135.5" width="1" height="4" fill="#ccd6eb"/>
<rect x="439.67" y="135.5" width="1" height="4" fill="#ccd6eb"/>
<rect x="46.70" y="111.41" width="8.2" height="23.79" fill="#ff7e00" stroke="#333" stroke-width="1"/>
<rect x="63.27" y="111.41" width="8.2" height="23.79" fill="#ff7e00" stroke="#333" stroke-width="1"/>
<rect x="79.84" y="101.70" width="8.2" height="33.50" fill="#ff0000" stroke="#333" stroke-width="1"/>
<rect x="96.41" y="96.23" width="8.2" height="38.97" fill="#ff0000" stroke="#333" stroke-width="1"/>
<rect x="112.98" y="96.84" width="8.2" height="38.36" fill="#ff0000" stroke="#333" stroke-width="1"/>
<rect x="129.55" y="101.09" width="8.2" height="34.11" fill="#ff0000" stroke="#333" stroke-width="1"/>
<rect x="146.12" y="104.33" width="8.2" height="30.87" fill="#ff0000" stroke="#333" stroke-width="1"/>
<rect x="162.69" y="110.20" width="8.2" height="25.00" fill="#ff7e00" stroke="#333" stroke-width="1"/>
<rect x="179.26" y="116.07" width="8.2" height="19.13" fill="#ffff00" stroke="#333" stroke-width="1"/>
<rect x="195.83" y="118.90" width="8.2" height="16.30" fill="#ffff00" stroke="#333" stroke-width="1"/>
<rect x="212.40" y="120.52" width="8.2" height="14.68" fill="#ffff00" stroke="#333" stroke-width="1"/>
<rect x="228.97" y="118.50" width="8.2" height="16.70" fill="#ffff00" stroke="#333" stroke-width="1"/>
<rect x="245.53" y="115.66" width="8.2" height="19.54" fill="#ffff00" stroke="#333" stroke-width="1"/>
<rect x="262.10" y="115.46" width="8.2" height="19.74" fill="#ffff00" stroke="#333" stroke-width="1"/>
<rect x="278.67" y="117.08" width="8.2" height="18.12" fill="#ffff00" stroke="#333" stroke-width="1"/>
<rect x="295.24" y="120.12" width="8.2" height="15.08" fill="#ffff00" stroke="#333" stroke-width="1"/>
<rect x="311.81" y="121.13" width="8.2" height="14.07" fill="#ffff00" stroke="#333" stroke-width="1"/>
<rect x="328.38" y="116.07" width="8.2" height="19.13" fill="#ffff00" stroke="#333" stroke-width="1"/>
<rect x="344.95" y="112.63" width="8.2" height="22.57" fill="#ff7e00" stroke="#333" stroke-width="1"/>
<rect x="361.52" y="110.60" width="8.2" height="24.60" fill="#ff7e00" stroke="#333" stroke-width="1"/>
<rect x="378.09" y="115.06" width="8.2" height="20.14" fill="#ff7e00" stroke="#333" stroke-width="1"/>
<rect x="394.66" y="114.25" width="8.2" height="20.95" fill="#ff7e00" stroke="#333" stroke-width="1"/>
<rect x="411.23" y="112.42" width="8.2" height="22.78" fill="#ff7e00" stroke="#333" stroke-width="1"/>
<rect x="427.80" y="110.20" width="8.2" height="25.00" fill="#ff7e00" stroke="#333" stroke-width="1"/>
<text transform="translate(51.80,144.50) rotate(-45)" text-anchor="end" font-size="6.5" letter-spacing="0.12" fill="#666">8 PM</text>
<text transform="translate(68.37,144.50) rotate(-45)" text-anchor="end" font-size="6.5" letter-spacing="0.12" fill="#666">9 PM</text>
<text transform="translate(84.94,144.50) rotate(-45)" text-anchor="end" font-size="6.5" letter-spacing="0.12" fill="#666">10 PM</text>
<text transform="translate(101.51,144.50) rotate(-45)" text-anchor="end" font-size="6.5" letter-spacing="0.12" fill="#666">11 PM</text>
<text transform="translate(118.08,144.50) rotate(-45)" text-anchor="end" font-size="6.5" letter-spacing="0.12" fill="#666">Feb 22, 2021 12 AM</text>
<text transform="translate(134.65,144.50) rotate(-45)" text-anchor="end" font-size="6.5" letter-spacing="0.12" fill="#666">1 AM</text>
<text transform="translate(151.22,144.50) rotate(-45)" text-anchor="end" font-size="6.5" letter-spacing="0.12" fill="#666">2 AM</text>
<text transform="translate(167.79,144.50) rotate(-45)" text-anchor="end" font-size="6.5" letter-spacing="0.12" fill="#666">3 AM</text>
<text transform="translate(184.36,144.50) rotate(-45)" text-anchor="end" font-size="6.5" letter-spacing="0.12" fill="#666">4 AM</text>
<text transform="translate(200.93,144.50) rotate(-45)" text-anchor="end" font-size="6.5" letter-spacing="0.12" fill="#666">5 AM</text>
<text transform="translate(217.50,144.50) rotate(-45)" text-anchor="end" font-size="6.5" letter-spacing="0.12" fill="#666">6 AM</text>
<text transform="translate(234.07,144.50) rotate(-45)" text-anchor="end" font-size="6.5" letter-spacing="0.12" fill="#666">7 AM</text>
<text transform="translate(250.63,144.50) rotate(-45)" text-anchor="end" font-size="6.5" letter-spacing="0.12" fill="#666">8 AM</text>
<text transform="translate(267.20,144.50) rotate(-45)" text-anchor="end" font-size="6.5" letter-spacing="0.12" fill="#666">9 AM</text>
<text transform="translate(283.77,144.50) rotate(-45)" text-anchor="end" font-size="6.5" letter-spacing="0.12" fill="#666">10 AM</text>
<text transform="translate(300.34,144.50) rotate(-45)" text-anchor="end" font-size="6.5" letter-spacing="0.12" fill="#666">11 AM</text>
<text transform="translate(316.91,144.50) rotate(-45)" text-anchor="end" font-size="6.5" letter-spacing="0.12" fill="#666">12 PM</text>
<text transform="translate(333.48,144.50) rotate(-45)" text-anchor="end" font-size="6.5" letter-spacing="0.12" fill="#666">1 PM</text>
<text transform="translate(350.05,144.50) rotate(-45)" text-anchor="end" font-size="6.5" letter-spacing="0.12" fill="#666">2 PM</text>
<text transform="translate(366.62,144.50) rotate(-45)" text-anchor="end" font-size="6.5" letter-spacing="0.12" fill="#666">3 PM</text>
<text transform="translate(383.19,144.50) rotate(-45)" text-anchor="end" font-size="6.5" letter-spacing="0.12" fill="#666">4 PM</text>
<text transform="translate(399.76,144.50) rotate(-45)" text-anchor="end" font-size="6.5" letter-spacing="0.12" fill="#666">5 PM</text>
<text transform="translate(416.33,144.50) rotate(-45)" text-anchor="end" font-size="6.5" letter-spacing="0.12" fill="#666">6 PM</text>
<text transform="translate(432.90,144.50) rotate(-45)" text-anchor="end" font-size="6.5" letter-spacing="0.12" fill="#666">7 PM</text>
<text x="223.3" y="13.100000000000023" text-anchor="middle" font-size="10" fill="#333" letter-spacing="0.3">Bishkek – PM2.5</text>
<text transform="translate(16.5,81.5) rotate(-90)" text-anchor="middle" font-size="7" fill="#333">AQI</text></svg>
</div>

<div id="cc" class="abs">
<div id="cchead" class="abs">
<div class="abs" style="left:0;width:138px;top:2.5px;font-size:8.4px;line-height:10px;">Current Conditions</div>
<div class="abs" style="left:0;width:138px;top:15.5px;font-size:6.8px;line-height:8px;">observed at</div>
<div class="abs" style="left:0;width:138px;top:26.2px;font-size:8.35px;line-height:10px;">Feb 22, 2021 7:00 PM (LT)</div>
</div>
<div id="ccorange" class="abs"><div style="padding-top:10px;">126 AQI<br>Unhealthy for Sensitive<br>Groups<br>PM2.5</div></div>
<div id="cchealth" class="abs">
<div class="abs" style="left:0;width:138px;top:4.3px;text-align:center;font-weight:bold;font-size:6.6px;line-height:9px;">Health Message</div>
<div class="abs" style="left:3px;width:136px;top:17px;font-size:6.66px;line-height:11.3px;color:#444;white-space:nowrap;">When AQI values are between 101 and 150,<br>members of sensitive groups may<br>experience health effects, but the general<br>public is unlikely to be affected.</div>
</div>
</div>

</body></html>
